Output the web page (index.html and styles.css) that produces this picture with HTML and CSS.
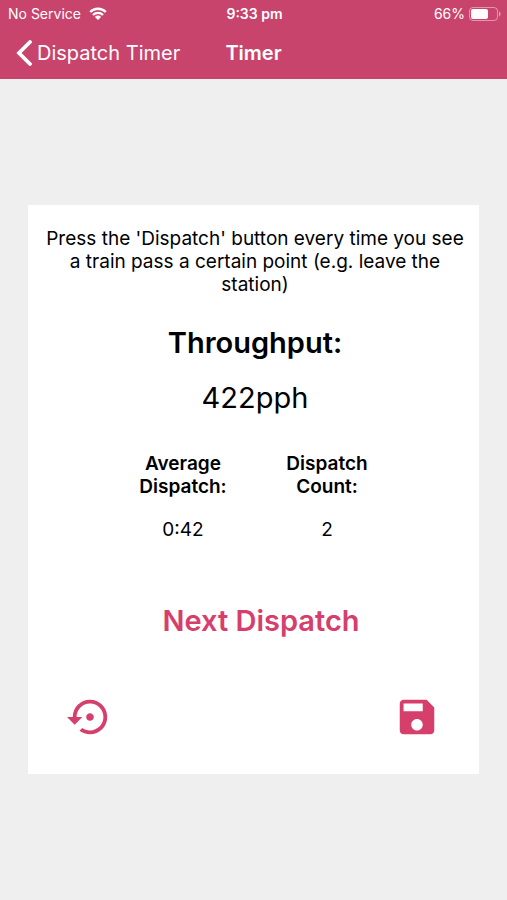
FILE: index.html
```html
<!DOCTYPE html>
<html lang="en">
<head>
<meta charset="utf-8">
<meta name="viewport" content="width=device-width, initial-scale=1">
<title>Timer</title>
<link rel="stylesheet" href="styles.css">
</head>
<body>
<header class="top">
  <div class="status">
    <div class="status-left">
      <span>No Service</span>
      <svg class="wifi" viewBox="0 0 18 14" aria-hidden="true">
        <path d="M1.200 5a11 11 0 0 1 15.600 0M4 8a7 7 0 0 1 10 0" fill="none" stroke="currentColor" stroke-width="2.400"/>
        <path d="M9 13 5.900 9.900a4.400 4.400 0 0 1 6.200 0z" fill="currentColor"/>
      </svg>
    </div>
    <span class="clock">9:33 pm</span>
    <div class="status-right">
      <span>66%</span>
      <svg class="battery" viewBox="0 0 32 14" aria-hidden="true">
        <rect x="0.5" y="0.5" width="28" height="13" rx="3.5" fill="none" stroke="currentColor" opacity="0.45"/>
        <rect x="2" y="2" width="17" height="10" rx="2" fill="currentColor"/>
        <path d="M30 4.500c2 .6 2 4.400 0 5z" fill="currentColor" opacity="0.5"/>
      </svg>
    </div>
  </div>
  <nav class="nav">
    <a class="back" href="#">
      <svg class="chevron" viewBox="0 0 16 26" aria-hidden="true"><path d="M14 2 3 13l11 11" fill="none" stroke="currentColor" stroke-width="3.8" stroke-linecap="round"/></svg>
      <span>Dispatch Timer</span>
    </a>
    <h1 class="title">Timer</h1>
  </nav>
</header>
<main class="page">
  <section class="card">
    <p class="hint">Press the 'Dispatch' button every time you see a train pass a certain point (e.g. leave the station)</p>
    <h2 class="heading">Throughput:</h2>
    <p class="rate">422pph</p>
    <dl class="stats">
      <div class="stat"><dt>Average Dispatch:</dt><dd>0:42</dd></div>
      <div class="stat"><dt>Dispatch Count:</dt><dd>2</dd></div>
    </dl>
    <button class="next" type="button">Next Dispatch</button>
    <div class="actions">
      <button class="icon-button" type="button" aria-label="Reset">
        <svg class="icon" viewBox="0 0 24 24" aria-hidden="true"><path d="M14 12c0-1.100-.9-2-2-2s-2 .9-2 2 .9 2 2 2 2-.9 2-2zm-2-9c-4.970 0-9 4.030-9 9H0l4 4 4-4H5c0-3.870 3.130-7 7-7s7 3.130 7 7-3.130 7-7 7c-1.510 0-2.910-.49-4.060-1.300l-1.420 1.440C8.040 20.300 9.940 21 12 21c4.970 0 9-4.030 9-9s-4.030-9-9-9z" fill="currentColor"/></svg>
      </button>
      <button class="icon-button" type="button" aria-label="Save">
        <svg class="icon" viewBox="0 0 24 24" aria-hidden="true"><path d="M17 3H5c-1.110 0-2 .9-2 2v14c0 1.100.89 2 2 2h14c1.100 0 2-.9 2-2V7l-4-4zm-5 16c-1.660 0-3-1.340-3-3s1.340-3 3-3 3 1.340 3 3-1.340 3-3 3zm3-10H5V5h10v4z" fill="currentColor"/></svg>
      </button>
    </div>
  </section>
</main>
</body>
</html>
```

FILE: styles.css
```css
* { box-sizing: border-box; }

body {
  margin: 0;
  min-height: 100vh;
  display: flex;
  flex-direction: column;
  background: #efefef;
  color: #000;
  font-family: Inter, Roboto, sans-serif;
}

h1, h2, p, dl, dd { margin: 0; }

button {
  padding: 0;
  border: 0;
  background: none;
  color: #d63e6c;
  font: inherit;
}

.top {
  background: #c8446c;
  color: #fff;
}

.status {
  display: grid;
  grid-template-columns: 1fr auto 1fr;
  align-items: center;
  height: 27px;
  padding: 0 6px 0 8px;
  font-size: 14px;
}

.status-left, .status-right {
  display: flex;
  align-items: center;
  gap: 8px;
}

.status-right { justify-content: flex-end; gap: 4px; }
.clock { font-weight: 600; }
.wifi { width: 18px; height: 14px; }
.battery { width: 32px; height: 14px; }

.nav {
  display: grid;
  grid-template-columns: 1fr auto 1fr;
  align-items: center;
  height: 52px;
  padding: 0 16px;
}

.back {
  display: flex;
  align-items: center;
  gap: 5px;
  color: inherit;
  font-size: 20px;
  text-decoration: none;
  white-space: nowrap;
}

.chevron { width: 16px; height: 26px; }
.title { font-size: 20px; font-weight: 600; }

.page {
  flex: 1;
  display: flex;
  align-items: center;
  padding: 24px 28px;
}

.card {
  flex: 1;
  display: flex;
  flex-direction: column;
  align-items: center;
  padding: 22px 12px 34px 15px;
  background: #fff;
  font-size: 19px;
  line-height: 23px;
  text-align: center;
}

.heading {
  margin-top: 29px;
  font-size: 29px;
  font-weight: 600;
  line-height: 36px;
}

.rate {
  margin-top: 19px;
  font-size: 29px;
  line-height: 36px;
}

.stats {
  display: grid;
  grid-template-columns: 104px 104px;
  gap: 40px;
  margin-top: 36px;
}

.stat { display: grid; gap: 20px; }
.stat dt { font-weight: 600; }

.next {
  margin-top: 62px;
  padding-left: 12px;
  font-size: 29px;
  font-weight: 600;
  line-height: 36px;
}

.actions {
  align-self: stretch;
  display: flex;
  justify-content: space-between;
  margin-top: 55px;
  padding: 0 27px 0 24px;
}

.icon-button, .icon { display: block; width: 46px; height: 46px; }
```
